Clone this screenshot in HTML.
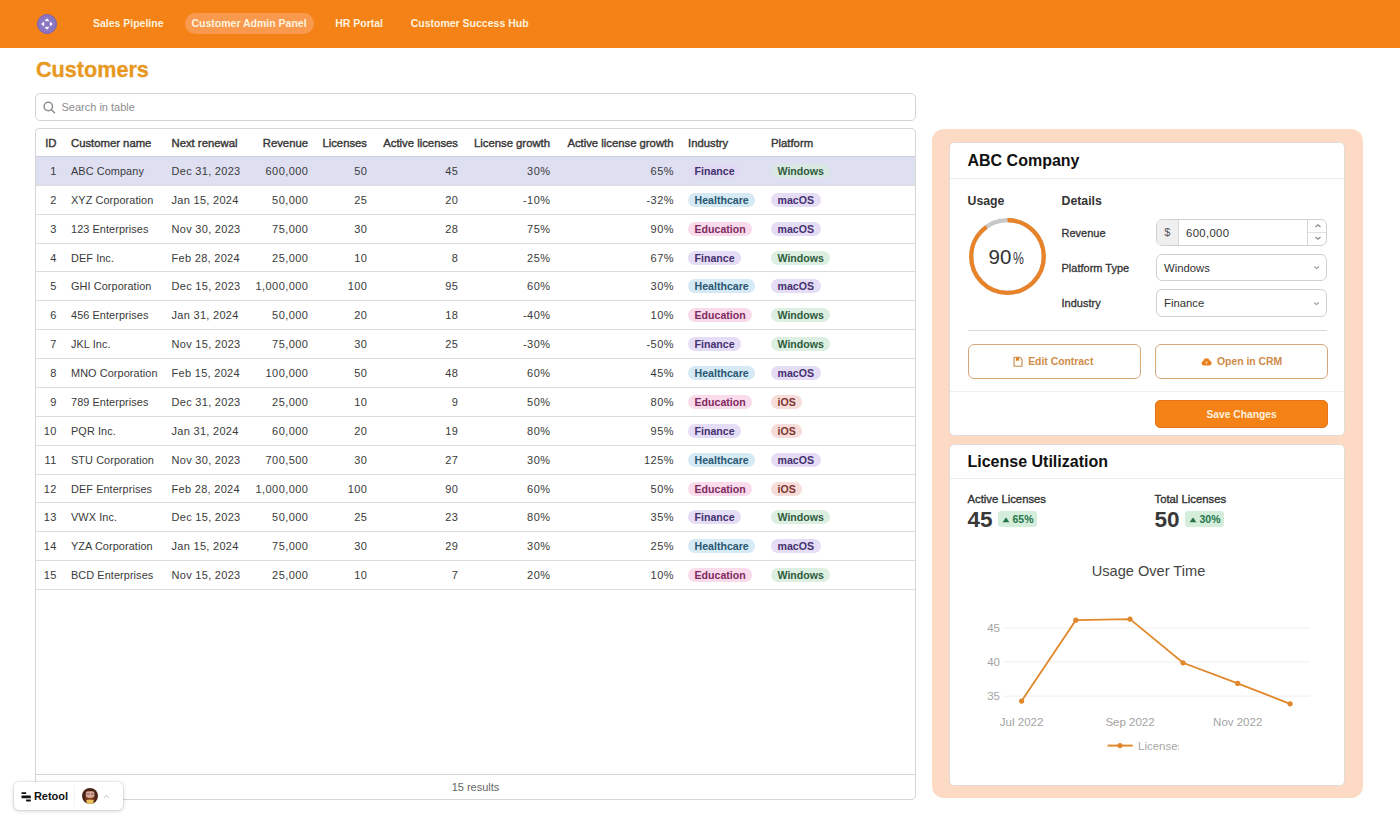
<!DOCTYPE html>
<html><head><meta charset="utf-8">
<style>
*{box-sizing:border-box;margin:0;padding:0}
html,body{width:1400px;height:832px;overflow:hidden;background:#fff;font-family:"Liberation Sans",sans-serif;color:#333}
.abs{position:absolute}
/* header */
#hdr{position:absolute;left:0;top:0;width:1400px;height:48px;background:#f58216}
#logo{position:absolute;left:37px;top:13.7px;width:20px;height:20px}
.nav{position:absolute;top:13px;height:20.5px;line-height:20.5px;font-size:10.5px;font-weight:bold;color:#fff3df;white-space:nowrap}
.nav.act{background:#f8994e;border-radius:11px;padding:0 7px}
#title{position:absolute;left:36px;top:57px;font-size:21.6px;line-height:26px;font-weight:bold;color:#e8991f;-webkit-text-stroke:0.3px #e3941c;letter-spacing:0px}
#search{position:absolute;left:35px;top:93px;width:881px;height:28px;border:1px solid #d4d4d4;border-radius:5px}
#search .ph{position:absolute;left:25.5px;top:0;line-height:26px;font-size:11px;color:#8e8e8e}
/* table */
#tbl{position:absolute;left:35px;top:128px;width:881px;height:671.5px;border:1px solid #d6d6d6;border-radius:4px;overflow:hidden}
.hrow{position:absolute;left:0;top:0;width:100%;height:28px}
.hc{position:absolute;top:0.6px;line-height:27.5px;font-size:11.3px;font-weight:normal;-webkit-text-stroke:0.4px #383838;color:#383838;white-space:nowrap}
.row{position:absolute;left:0;width:100%;height:28.87px;border-top:1px solid #dcdcdc}
.row.sel{background:#dfdff2;border-top-color:#cdcde0}
.c{position:absolute;top:1px;line-height:27.5px;font-size:11px;color:#3a3a3a;white-space:nowrap}
.nm{font-size:10.9px;letter-spacing:0.08px}
.dt{letter-spacing:0.3px}
.nu{letter-spacing:0.45px;margin-right:-0.45px}
.r{text-align:right}
.tag{display:inline-block;height:14px;line-height:14px;padding:0 6.5px;border-radius:7px;font-size:10.6px;font-weight:bold}
.t-fin{background:#e5ddf5;color:#44306f}
.t-hc{background:#d5eaf5;color:#2a5772}
.t-edu{background:#f9dbeb;color:#7f2a60}
.t-win{background:#dcefe1;color:#305c3e}
.t-mac{background:#e5ddf5;color:#44306f}
.t-ios{background:#f6ddd9;color:#7e3430}
.sel .t-fin{background:#e0daf3}
.sel .t-win{background:#d9e8e2}
#foot{position:absolute;left:0;top:645px;width:100%;height:26px;border-top:1px solid #d6d6d6;text-align:center;line-height:25px;font-size:11px;color:#666}
.lastb{position:absolute;left:0;top:460.05px;width:100%;height:1px;background:#dcdcdc}
/* right panel */
#panel{position:absolute;left:931.5px;top:129.4px;width:431px;height:668.6px;background:#fcdac3;border-radius:12px}
.card{position:absolute;left:17px;width:396.4px;background:#fff;border:1px solid #e3dcd6;border-radius:5px;overflow:hidden}
.ctitle{position:absolute;left:18px;font-size:16px;font-weight:bold;color:#111;white-space:nowrap}
.sep{position:absolute;left:0;width:100%;height:1px;background:#ececec}
.h2{position:absolute;font-size:12.3px;font-weight:bold;color:#333;white-space:nowrap}
.lbl{position:absolute;left:112px;font-size:11px;font-weight:normal;color:#333;-webkit-text-stroke:0.3px #333;white-space:nowrap}
.inp{position:absolute;left:206.5px;width:171px;height:27.5px;border:1px solid #d0d0d0;border-radius:6px;background:#fff}
.inp .v{position:absolute;left:7px;top:1px;line-height:25.5px;font-size:11.3px;color:#333}
.btn{position:absolute;height:35px;border:1px solid #d7a77c;border-radius:6px;font-size:10.4px;font-weight:bold;color:#cf8b48;text-align:center;line-height:33px;white-space:nowrap}
.save{position:absolute;height:27.5px;background:#f58216;border:1px solid #e3761c;border-radius:5px;font-size:10.3px;font-weight:bold;color:#fff1dc;text-align:center;line-height:27px}
.stat-l{position:absolute;font-size:11.3px;font-weight:normal;color:#333;-webkit-text-stroke:0.35px #333;white-space:nowrap}
.stat-v{position:absolute;font-size:22.5px;font-weight:bold;color:#383838;white-space:nowrap}
.badge{position:absolute;height:16px;background:#d5eedc;border-radius:3px;font-size:10.5px;font-weight:bold;color:#237449;line-height:16px;white-space:nowrap}
/* retool badge */
#rt{position:absolute;left:14px;top:782px;width:108.5px;height:28px;background:#fff;border-radius:5px;box-shadow:0 1px 4px rgba(0,0,0,0.18), 0 0 0 1px rgba(0,0,0,0.05)}
</style></head>
<body>
<div id="hdr">
  <div id="logo">
    <svg width="20" height="20" viewBox="0 0 20 20" style="position:absolute;left:0;top:0">
      <circle cx="10" cy="10" r="9.5" fill="#8b76c4" stroke="#7a63b5" stroke-width="1"/>
      <g fill="#fff" stroke="#fff" stroke-width="0.9" stroke-linejoin="round">
      <path d="M10 4.7 L11.8 6.7 L8.2 6.7 Z"/>
      <path d="M10 15.3 L11.8 13.3 L8.2 13.3 Z"/>
      <path d="M4.7 10 L6.7 8.2 L6.7 11.8 Z"/>
      <path d="M15.3 10 L13.3 8.2 L13.3 11.8 Z"/>
      </g>
    </svg>
  </div>
  <div class="nav" style="left:92.9px">Sales Pipeline</div>
  <div class="nav act" style="left:184.5px">Customer Admin Panel</div>
  <div class="nav" style="left:335.2px">HR Portal</div>
  <div class="nav" style="left:410.7px">Customer Success Hub</div>
</div>

<div id="title">Customers</div>

<div id="search">
  <svg class="abs" style="left:7px;top:6.5px" width="13" height="13" viewBox="0 0 13 13">
    <circle cx="5.3" cy="5.5" r="4.2" fill="none" stroke="#8e8e8e" stroke-width="1.5"/>
    <path d="M8.4 8.7 L11.5 11.8" stroke="#8e8e8e" stroke-width="1.5" stroke-linecap="round"/>
  </svg>
  <div class="ph">Search in table</div>
</div>

<div id="tbl">
  <div class="hrow"><div class="hc r" style="right:858.5px">ID</div><div class="hc" style="left:35.0px">Customer name</div><div class="hc" style="left:135.5px">Next renewal</div><div class="hc r" style="right:607.0px">Revenue</div><div class="hc r" style="right:548.0px">Licenses</div><div class="hc r" style="right:457.0px">Active licenses</div><div class="hc r" style="right:365.0px">License growth</div><div class="hc r" style="right:241.5px">Active license growth</div><div class="hc" style="left:652.0px">Industry</div><div class="hc" style="left:735.0px">Platform</div></div>
<div class="row sel" style="top:27.00px"><div class="c nu r" style="right:858.5px">1</div><div class="c nm" style="left:35.0px">ABC Company</div><div class="c dt" style="left:135.5px">Dec 31, 2023</div><div class="c nu r" style="right:607.0px">600,000</div><div class="c nu r" style="right:548.0px">50</div><div class="c nu r" style="right:457.0px">45</div><div class="c nu r" style="right:365.0px">30%</div><div class="c nu r" style="right:241.5px">65%</div><div class="c tg" style="left:652.0px"><span class="tag t-fin">Finance</span></div><div class="c tg" style="left:735.0px"><span class="tag t-win">Windows</span></div></div>
<div class="row" style="top:55.87px"><div class="c nu r" style="right:858.5px">2</div><div class="c nm" style="left:35.0px">XYZ Corporation</div><div class="c dt" style="left:135.5px">Jan 15, 2024</div><div class="c nu r" style="right:607.0px">50,000</div><div class="c nu r" style="right:548.0px">25</div><div class="c nu r" style="right:457.0px">20</div><div class="c nu r" style="right:365.0px">-10%</div><div class="c nu r" style="right:241.5px">-32%</div><div class="c tg" style="left:652.0px"><span class="tag t-hc">Healthcare</span></div><div class="c tg" style="left:735.0px"><span class="tag t-mac">macOS</span></div></div>
<div class="row" style="top:84.74px"><div class="c nu r" style="right:858.5px">3</div><div class="c nm" style="left:35.0px">123 Enterprises</div><div class="c dt" style="left:135.5px">Nov 30, 2023</div><div class="c nu r" style="right:607.0px">75,000</div><div class="c nu r" style="right:548.0px">30</div><div class="c nu r" style="right:457.0px">28</div><div class="c nu r" style="right:365.0px">75%</div><div class="c nu r" style="right:241.5px">90%</div><div class="c tg" style="left:652.0px"><span class="tag t-edu">Education</span></div><div class="c tg" style="left:735.0px"><span class="tag t-mac">macOS</span></div></div>
<div class="row" style="top:113.61px"><div class="c nu r" style="right:858.5px">4</div><div class="c nm" style="left:35.0px">DEF Inc.</div><div class="c dt" style="left:135.5px">Feb 28, 2024</div><div class="c nu r" style="right:607.0px">25,000</div><div class="c nu r" style="right:548.0px">10</div><div class="c nu r" style="right:457.0px">8</div><div class="c nu r" style="right:365.0px">25%</div><div class="c nu r" style="right:241.5px">67%</div><div class="c tg" style="left:652.0px"><span class="tag t-fin">Finance</span></div><div class="c tg" style="left:735.0px"><span class="tag t-win">Windows</span></div></div>
<div class="row" style="top:142.48px"><div class="c nu r" style="right:858.5px">5</div><div class="c nm" style="left:35.0px">GHI Corporation</div><div class="c dt" style="left:135.5px">Dec 15, 2023</div><div class="c nu r" style="right:607.0px">1,000,000</div><div class="c nu r" style="right:548.0px">100</div><div class="c nu r" style="right:457.0px">95</div><div class="c nu r" style="right:365.0px">60%</div><div class="c nu r" style="right:241.5px">30%</div><div class="c tg" style="left:652.0px"><span class="tag t-hc">Healthcare</span></div><div class="c tg" style="left:735.0px"><span class="tag t-mac">macOS</span></div></div>
<div class="row" style="top:171.35px"><div class="c nu r" style="right:858.5px">6</div><div class="c nm" style="left:35.0px">456 Enterprises</div><div class="c dt" style="left:135.5px">Jan 31, 2024</div><div class="c nu r" style="right:607.0px">50,000</div><div class="c nu r" style="right:548.0px">20</div><div class="c nu r" style="right:457.0px">18</div><div class="c nu r" style="right:365.0px">-40%</div><div class="c nu r" style="right:241.5px">10%</div><div class="c tg" style="left:652.0px"><span class="tag t-edu">Education</span></div><div class="c tg" style="left:735.0px"><span class="tag t-win">Windows</span></div></div>
<div class="row" style="top:200.22px"><div class="c nu r" style="right:858.5px">7</div><div class="c nm" style="left:35.0px">JKL Inc.</div><div class="c dt" style="left:135.5px">Nov 15, 2023</div><div class="c nu r" style="right:607.0px">75,000</div><div class="c nu r" style="right:548.0px">30</div><div class="c nu r" style="right:457.0px">25</div><div class="c nu r" style="right:365.0px">-30%</div><div class="c nu r" style="right:241.5px">-50%</div><div class="c tg" style="left:652.0px"><span class="tag t-fin">Finance</span></div><div class="c tg" style="left:735.0px"><span class="tag t-win">Windows</span></div></div>
<div class="row" style="top:229.09px"><div class="c nu r" style="right:858.5px">8</div><div class="c nm" style="left:35.0px">MNO Corporation</div><div class="c dt" style="left:135.5px">Feb 15, 2024</div><div class="c nu r" style="right:607.0px">100,000</div><div class="c nu r" style="right:548.0px">50</div><div class="c nu r" style="right:457.0px">48</div><div class="c nu r" style="right:365.0px">60%</div><div class="c nu r" style="right:241.5px">45%</div><div class="c tg" style="left:652.0px"><span class="tag t-hc">Healthcare</span></div><div class="c tg" style="left:735.0px"><span class="tag t-mac">macOS</span></div></div>
<div class="row" style="top:257.96px"><div class="c nu r" style="right:858.5px">9</div><div class="c nm" style="left:35.0px">789 Enterprises</div><div class="c dt" style="left:135.5px">Dec 31, 2023</div><div class="c nu r" style="right:607.0px">25,000</div><div class="c nu r" style="right:548.0px">10</div><div class="c nu r" style="right:457.0px">9</div><div class="c nu r" style="right:365.0px">50%</div><div class="c nu r" style="right:241.5px">80%</div><div class="c tg" style="left:652.0px"><span class="tag t-edu">Education</span></div><div class="c tg" style="left:735.0px"><span class="tag t-ios">iOS</span></div></div>
<div class="row" style="top:286.83px"><div class="c nu r" style="right:858.5px">10</div><div class="c nm" style="left:35.0px">PQR Inc.</div><div class="c dt" style="left:135.5px">Jan 31, 2024</div><div class="c nu r" style="right:607.0px">60,000</div><div class="c nu r" style="right:548.0px">20</div><div class="c nu r" style="right:457.0px">19</div><div class="c nu r" style="right:365.0px">80%</div><div class="c nu r" style="right:241.5px">95%</div><div class="c tg" style="left:652.0px"><span class="tag t-fin">Finance</span></div><div class="c tg" style="left:735.0px"><span class="tag t-ios">iOS</span></div></div>
<div class="row" style="top:315.70px"><div class="c nu r" style="right:858.5px">11</div><div class="c nm" style="left:35.0px">STU Corporation</div><div class="c dt" style="left:135.5px">Nov 30, 2023</div><div class="c nu r" style="right:607.0px">700,500</div><div class="c nu r" style="right:548.0px">30</div><div class="c nu r" style="right:457.0px">27</div><div class="c nu r" style="right:365.0px">30%</div><div class="c nu r" style="right:241.5px">125%</div><div class="c tg" style="left:652.0px"><span class="tag t-hc">Healthcare</span></div><div class="c tg" style="left:735.0px"><span class="tag t-mac">macOS</span></div></div>
<div class="row" style="top:344.57px"><div class="c nu r" style="right:858.5px">12</div><div class="c nm" style="left:35.0px">DEF Enterprises</div><div class="c dt" style="left:135.5px">Feb 28, 2024</div><div class="c nu r" style="right:607.0px">1,000,000</div><div class="c nu r" style="right:548.0px">100</div><div class="c nu r" style="right:457.0px">90</div><div class="c nu r" style="right:365.0px">60%</div><div class="c nu r" style="right:241.5px">50%</div><div class="c tg" style="left:652.0px"><span class="tag t-edu">Education</span></div><div class="c tg" style="left:735.0px"><span class="tag t-ios">iOS</span></div></div>
<div class="row" style="top:373.44px"><div class="c nu r" style="right:858.5px">13</div><div class="c nm" style="left:35.0px">VWX Inc.</div><div class="c dt" style="left:135.5px">Dec 15, 2023</div><div class="c nu r" style="right:607.0px">50,000</div><div class="c nu r" style="right:548.0px">25</div><div class="c nu r" style="right:457.0px">23</div><div class="c nu r" style="right:365.0px">80%</div><div class="c nu r" style="right:241.5px">35%</div><div class="c tg" style="left:652.0px"><span class="tag t-fin">Finance</span></div><div class="c tg" style="left:735.0px"><span class="tag t-win">Windows</span></div></div>
<div class="row" style="top:402.31px"><div class="c nu r" style="right:858.5px">14</div><div class="c nm" style="left:35.0px">YZA Corporation</div><div class="c dt" style="left:135.5px">Jan 15, 2024</div><div class="c nu r" style="right:607.0px">75,000</div><div class="c nu r" style="right:548.0px">30</div><div class="c nu r" style="right:457.0px">29</div><div class="c nu r" style="right:365.0px">30%</div><div class="c nu r" style="right:241.5px">25%</div><div class="c tg" style="left:652.0px"><span class="tag t-hc">Healthcare</span></div><div class="c tg" style="left:735.0px"><span class="tag t-mac">macOS</span></div></div>
<div class="row" style="top:431.18px"><div class="c nu r" style="right:858.5px">15</div><div class="c nm" style="left:35.0px">BCD Enterprises</div><div class="c dt" style="left:135.5px">Nov 15, 2023</div><div class="c nu r" style="right:607.0px">25,000</div><div class="c nu r" style="right:548.0px">10</div><div class="c nu r" style="right:457.0px">7</div><div class="c nu r" style="right:365.0px">20%</div><div class="c nu r" style="right:241.5px">10%</div><div class="c tg" style="left:652.0px"><span class="tag t-edu">Education</span></div><div class="c tg" style="left:735.0px"><span class="tag t-win">Windows</span></div></div>
  <div class="lastb"></div>
  <div id="foot">15 results</div>
</div>

<div id="panel">
  <div class="card" style="top:13.1px;height:293.3px">
    <div class="ctitle" style="top:8px;line-height:20px">ABC Company</div>
    <div class="sep" style="top:34.6px"></div>
    <div class="h2" style="left:18px;top:50px;line-height:16px">Usage</div>
    <div class="h2" style="left:112px;top:50px;line-height:16px">Details</div>
    <svg class="abs" style="left:18px;top:74px" width="79" height="79" viewBox="0 0 79 79">
      <circle cx="39.5" cy="39.5" r="36.3" fill="none" stroke="#c8c8c8" stroke-width="4.2"/>
      <circle cx="39.5" cy="39.5" r="36.3" fill="none" stroke="#e8832a" stroke-width="4.2"
        stroke-dasharray="205.3 228.1" transform="rotate(-90 39.5 39.5)"/>
    </svg>
    <div class="abs" style="left:39px;top:99.5px;line-height:28px;white-space:nowrap;color:#333"><span style="font-size:20.5px">90</span><span style="font-size:17px;display:inline-block;transform:scaleX(0.72);transform-origin:0 0;margin-left:1.5px">%</span></div>

    <div class="lbl" style="top:82.5px;line-height:14px">Revenue</div>
    <div class="inp" style="top:75.3px">
      <div class="abs" style="left:0;top:0;width:21.8px;height:25.5px;background:#efefef;border-right:1px solid #d6d6d6;border-radius:4px 0 0 4px;text-align:center;line-height:25.5px;font-size:11px;color:#555">$</div>
      <div class="v" style="left:29px;letter-spacing:0.35px">600,000</div>
      <div class="abs" style="right:0;top:0;width:19px;height:25.5px;border-left:1px solid #d6d6d6">
        <div class="abs" style="left:0;top:12.5px;width:100%;height:1px;background:#e0e0e0"></div>
        <svg class="abs" style="left:5.5px;top:3.5px" width="8" height="6" viewBox="0 0 8 6"><path d="M1.5 4 L4 1.7 L6.5 4" fill="none" stroke="#888" stroke-width="1.2"/></svg>
        <svg class="abs" style="left:5.5px;top:15.5px" width="8" height="6" viewBox="0 0 8 6"><path d="M1.5 2 L4 4.3 L6.5 2" fill="none" stroke="#888" stroke-width="1.2"/></svg>
      </div>
    </div>

    <div class="lbl" style="top:117.5px;line-height:14px">Platform Type</div>
    <div class="inp" style="top:110.3px">
      <div class="v">Windows</div>
      <svg class="abs" style="right:5.6px;top:10.5px" width="7" height="5" viewBox="0 0 7 5"><path d="M1.2 1.5 L3.5 3.6 L5.8 1.5" fill="none" stroke="#999" stroke-width="1.1"/></svg>
    </div>

    <div class="lbl" style="top:152.5px;line-height:14px">Industry</div>
    <div class="inp" style="top:145.6px">
      <div class="v">Finance</div>
      <svg class="abs" style="right:5.6px;top:10.5px" width="7" height="5" viewBox="0 0 7 5"><path d="M1.2 1.5 L3.5 3.6 L5.8 1.5" fill="none" stroke="#999" stroke-width="1.1"/></svg>
    </div>

    <div class="abs" style="left:18px;top:187px;width:359.6px;height:1px;background:#d9d9d9"></div>

    <div class="btn" style="left:18px;top:201px;width:173px;padding-right:2px">
      <svg style="display:inline-block;vertical-align:-2px;margin-right:5.5px" width="10" height="11" viewBox="0 0 10 11"><path d="M1 1.2 H6.8 L9 3.4 V10.3 H1 Z" fill="#fffaf2" stroke="#c08a58" stroke-width="1.1" stroke-linejoin="round"/><path d="M3 1.2 H6 V5.2 L4.5 4.2 L3 5.2 Z" fill="#e0842c"/></svg>Edit Contract</div>
    <div class="btn" style="left:205.4px;top:201px;width:173.4px">
      <svg style="display:inline-block;vertical-align:-1px;margin-right:5px" width="11" height="9" viewBox="0 0 11 9"><path d="M2.6 8.5 A2.3 2.3 0 0 1 2.3 4 A3.3 3.3 0 0 1 8.6 3.4 A2.6 2.6 0 0 1 8.5 8.5 Z" fill="#ea7f1c"/><path d="M5.5 7.6 V4.6 M4.2 5.8 L5.5 4.5 L6.8 5.8" stroke="#fff" stroke-width="0.8" fill="none" opacity="0.6"/></svg>Open in CRM</div>

    <div class="sep" style="top:248px;background:#efefef"></div>
    <div class="save" style="left:205.4px;top:257px;width:173.4px">Save Changes</div>
  </div>

  <div class="card" style="top:314.3px;height:342px">
    <div class="ctitle" style="top:7px;line-height:20px">License Utilization</div>
    <div class="sep" style="top:33px"></div>
    <div class="stat-l" style="left:18px;top:47px;line-height:14px">Active Licenses</div>
    <div class="stat-v" style="left:18px;top:62px;line-height:26px">45</div>
    <div class="badge" style="left:48.5px;top:66.8px;width:38.5px;padding-left:3.5px">
      <svg style="display:inline-block;vertical-align:0.5px;margin-right:3px" width="8" height="6" viewBox="0 0 8 6"><path d="M0.6 5.3 L3.4 1.2 Q4 0.5 4.6 1.2 L7.4 5.3 Z" fill="#237449"/></svg>65%</div>
    <div class="stat-l" style="left:205px;top:47px;line-height:14px">Total Licenses</div>
    <div class="stat-v" style="left:205px;top:62px;line-height:26px">50</div>
    <div class="badge" style="left:235.5px;top:66.8px;width:38.5px;padding-left:3.5px">
      <svg style="display:inline-block;vertical-align:0.5px;margin-right:3px" width="8" height="6" viewBox="0 0 8 6"><path d="M0.6 5.3 L3.4 1.2 Q4 0.5 4.6 1.2 L7.4 5.3 Z" fill="#237449"/></svg>30%</div>

    <svg class="abs" style="left:0;top:0" width="396" height="342" viewBox="950 445.2 396 342">
      <text x="1148.5" y="576.5" text-anchor="middle" font-family="Liberation Sans" font-size="14.6" fill="#444">Usage Over Time</text>
      <g stroke="#efefef" stroke-width="1">
        <line x1="1004" y1="628" x2="1310" y2="628"/>
        <line x1="1004" y1="662" x2="1310" y2="662"/>
        <line x1="1004" y1="696.3" x2="1310" y2="696.3"/>
      </g>
      <g font-family="Liberation Sans" font-size="11.5" fill="#a3a3a3">
        <text x="1000" y="632" text-anchor="end">45</text>
        <text x="1000" y="666" text-anchor="end">40</text>
        <text x="1000" y="700.3" text-anchor="end">35</text>
        <text x="1021.6" y="726" text-anchor="middle">Jul 2022</text>
        <text x="1130" y="726" text-anchor="middle">Sep 2022</text>
        <text x="1237.7" y="726" text-anchor="middle">Nov 2022</text>
      </g>
      <polyline points="1021.6,701.3 1075.8,620.4 1130,619.3 1183,663 1237.7,683.6 1290.1,704" fill="none" stroke="#e0882e" stroke-width="1.8"/>
      <g fill="#e0882e">
        <circle cx="1021.6" cy="701.3" r="2.6"/>
        <circle cx="1075.8" cy="620.4" r="2.6"/>
        <circle cx="1130" cy="619.3" r="2.6"/>
        <circle cx="1183" cy="663" r="2.6"/>
        <circle cx="1237.7" cy="683.6" r="2.6"/>
        <circle cx="1290.1" cy="704" r="2.6"/>
      </g>
      <line x1="1107.6" y1="745.8" x2="1132.7" y2="745.8" stroke="#e0882e" stroke-width="2"/>
      <circle cx="1120" cy="745.8" r="2.6" fill="#e0882e"/>
      <defs><clipPath id="lc"><rect x="1136" y="735" width="43" height="20"/></clipPath></defs>
      <text x="1138" y="749.8" font-family="Liberation Sans" font-size="11.5" fill="#a8a8a8" clip-path="url(#lc)">Licenses</text>
    </svg>
  </div>
</div>

<div id="rt">
  <svg class="abs" style="left:6.5px;top:9.5px" width="11" height="10" viewBox="0 0 11 10"><path d="M0.8 0.3 H4.9 Q5.2 0.3 5.2 0.6 V1.8 Q5.2 2.1 4.9 2.1 H0.8 Q0.5 2.1 0.5 1.8 V0.6 Q0.5 0.3 0.8 0.3 Z M0.8 3.4 H9.4 Q9.8 3.4 9.8 3.8 V5.9 Q9.8 6.3 9.4 6.3 H0.8 Q0.5 6.3 0.5 5.9 V3.8 Q0.5 3.4 0.8 3.4 Z M5.4 7.5 H9.5 Q9.8 7.5 9.8 7.8 V9.1 Q9.8 9.4 9.5 9.4 H5.4 Q5.1 9.4 5.1 9.1 V7.8 Q5.1 7.5 5.4 7.5 Z" fill="#111"/></svg>
  <div class="abs" style="left:19.9px;top:7px;line-height:14px;font-size:11px;font-weight:bold;color:#111">Retool</div>
  <div class="abs" style="left:60px;top:4px;width:1px;height:20px;background:#f2f2f2"></div>
  <svg class="abs" style="left:68px;top:6px" width="16" height="16" viewBox="0 0 16 16">
    <defs><clipPath id="avc"><circle cx="8" cy="8" r="8"/></clipPath></defs>
    <g clip-path="url(#avc)">
      <rect width="16" height="16" fill="#4a2417"/>
      <rect x="3.8" y="3.3" width="8.6" height="6.6" rx="2" fill="#d8a896"/>
      <rect x="4.5" y="5.3" width="3" height="1.3" fill="#8a6a60"/>
      <rect x="8.7" y="5.3" width="3" height="1.3" fill="#8a6a60"/>
      <path d="M3.5 8.2 Q8 12.5 12.5 8.2 L12.8 12.5 Q8 15 3.2 12.5 Z" fill="#7a3a1e"/>
      <path d="M4.5 12 Q8 10.8 11.5 12 L11.5 16 H4.5 Z" fill="#e9c35e"/>
    </g>
  </svg>
  <svg class="abs" style="left:89px;top:11.5px" width="7" height="5" viewBox="0 0 7 5"><path d="M1.2 3.6 L3.5 1.4 L5.8 3.6" fill="none" stroke="#bbb" stroke-width="1"/></svg>
</div>
</body></html>
